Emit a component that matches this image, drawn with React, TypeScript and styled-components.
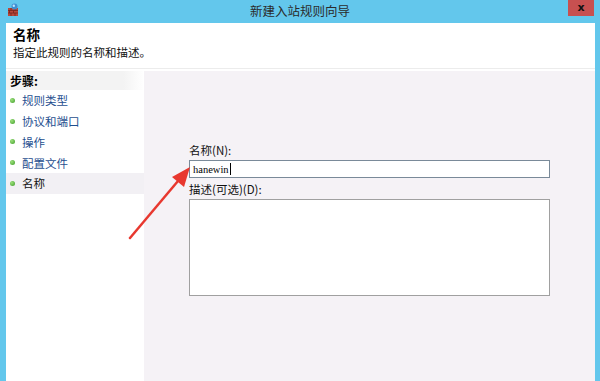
import React from "react"
import styled, { createGlobalStyle } from "styled-components"

const GlobalStyle = createGlobalStyle`
	html, body {
		margin: 0;
		padding: 0;
		background: #ffffff;
	}
	body {
		font-family: "Noto Sans CJK SC", "Noto Sans", "Liberation Sans", sans-serif;
		color: #000;
	}
`

const steps = ["规则类型", "协议和端口", "操作", "配置文件", "名称"]
const current = "名称"

const Window = styled.div`
	position: relative;
	width: 600px;
	height: 381px;
	overflow: hidden;
	background: #63c7ec;
	display: flex;
	flex-direction: column;
`

const TitleBar = styled.div`
	height: 23px;
	flex: none;
	display: flex;
	align-items: flex-start;
	position: relative;
`

const AppIcon = styled.svg`
	margin: 3px 0 0 8px;
	width: 10px;
	height: 13px;
`

const Title = styled.div`
	position: absolute;
	left: 0;
	right: 0;
	top: 3px;
	text-align: center;
	font-size: 12.5px;
	line-height: 16px;
	color: #2b2b2b;
`

const CloseButton = styled.div`
	margin-left: auto;
	margin-right: 6px;
	width: 26px;
	height: 16px;
	background: #c75050;
	color: #111;
	font-family: "DejaVu Sans", sans-serif;
	font-weight: bold;
	font-size: 11px;
	line-height: 15px;
	text-align: center;
	position: relative;
	z-index: 1;
`

const Frame = styled.div`
	flex: 1;
	margin: 0 5px 0 6px;
	background: #ffffff;
	display: flex;
	flex-direction: column;
	min-height: 0;
`

const Header = styled.div`
	height: 46px;
	flex: none;
	padding: 2px 0 0 7px;
	box-sizing: border-box;
	border-bottom: 1px solid #ececec;
`

const HeaderTitle = styled.div`
	font-size: 13.5px;
	font-weight: bold;
	line-height: 18px;
`

const HeaderText = styled.div`
	font-size: 11.5px;
	line-height: 16px;
	margin-top: 1px;
	color: #111;
`

const Main = styled.div`
	flex: 1;
	display: flex;
	min-height: 0;
	padding-top: 2px;
`

const StepsPanel = styled.div`
	width: 138px;
	flex: none;
	display: flex;
	flex-direction: column;
`

const StepsHeader = styled.div`
	height: 19px;
	padding-left: 4px;
	font-size: 12px;
	font-weight: bold;
	line-height: 19px;
	background: linear-gradient(to right, #f3f3f3 0%, #f3f3f3 85%, #ffffff 100%);
`

const StepRow = styled.div<{ $active?: boolean }>`
	height: 20.75px;
	display: flex;
	align-items: center;
	gap: 7px;
	padding-left: 4px;
	font-size: 11.5px;
	color: ${(p) => (p.$active ? "#111" : "#1f4f8f")};
	background: ${(p) => (p.$active ? "#f2f0f4" : "transparent")};
`

const Dot = styled.span`
	width: 5px;
	height: 5px;
	border-radius: 50%;
	background: radial-gradient(circle at 35% 35%, #9be07a, #3f9c2a);
	flex: none;
`

const Content = styled.div`
	flex: 1;
	background: #f5f2f6;
	padding: 72px 0 0 45px;
	display: flex;
	flex-direction: column;
`

const Label = styled.div`
	font-size: 11.5px;
	line-height: 15px;
	color: #111;
	margin-bottom: 2px;
`

const TextBox = styled.div`
	width: 361px;
	height: 18px;
	box-sizing: border-box;
	border: 1px solid #7a8a99;
	background: #fff;
	font-family: "Liberation Serif", serif;
	font-size: 10.5px;
	line-height: 15px;
	padding-left: 3px;
	display: flex;
	align-items: center;
	margin-bottom: 4px;
`

const Caret = styled.span`
	width: 1px;
	height: 12px;
	background: #000;
	margin-left: 1px;
`

const TextArea = styled.div`
	width: 361px;
	height: 97px;
	box-sizing: border-box;
	border: 1px solid #a0a0a0;
	background: #fff;
`

const Arrow = styled.svg`
	position: absolute;
	left: 0;
	top: 0;
	pointer-events: none;
`

export default function App() {
	return (
		<>
			<GlobalStyle />
			<Window>
				<TitleBar>
					<AppIcon viewBox="0 0 10 13">
						<rect x="0" y="5" width="10" height="8" fill="#b8473a" />
						<path d="M0 7.5h10M0 10h10M3 5v2.5M7 5v2.5M1.5 7.5v2.5M5.5 7.5v2.5M3 10v3M7 10v3" stroke="#6e211a" strokeWidth="0.7" />
						<circle cx="6.5" cy="3.5" r="3" fill="#3f8fd0" />
						<circle cx="5.8" cy="2.8" r="1.2" fill="#bfe4ff" />
					</AppIcon>
					<Title>新建入站规则向导</Title>
					<CloseButton>x</CloseButton>
				</TitleBar>
				<Frame>
					<Header>
						<HeaderTitle>名称</HeaderTitle>
						<HeaderText>指定此规则的名称和描述。</HeaderText>
					</Header>
					<Main>
						<StepsPanel>
							<StepsHeader>步骤:</StepsHeader>
							{steps.map((s) => (
								<StepRow key={s} $active={s === current}>
									<Dot />
									{s}
								</StepRow>
							))}
						</StepsPanel>
						<Content>
							<Label>名称(N):</Label>
							<TextBox>
								hanewin
								<Caret />
							</TextBox>
							<Label>描述(可选)(D):</Label>
							<TextArea />
						</Content>
					</Main>
				</Frame>
				<Arrow width="600" height="381" viewBox="0 0 600 381">
					<line x1="130" y1="238" x2="178" y2="181" stroke="#e8382f" strokeWidth="2.5" strokeLinecap="round" />
					<polygon points="190,167 172,177 184,187" fill="#e8382f" />
				</Arrow>
			</Window>
		</>
	)
}
